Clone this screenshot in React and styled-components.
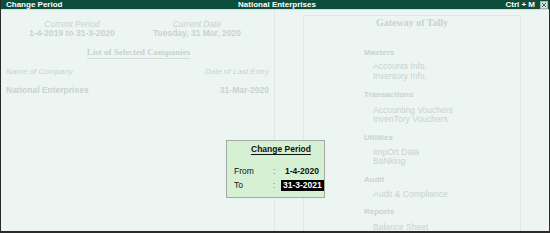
import React from "react";
import styled, { createGlobalStyle } from "styled-components";

const Global = createGlobalStyle`
  html, body { margin: 0; padding: 0; background: #edf5f3; }
  body { font-family: "Liberation Sans", Arial, sans-serif; }
`;

const Window = styled.div`
  position: relative;
  width: 550px;
  height: 233px;
  box-sizing: border-box;
  display: flex;
  flex-direction: column;
  background: #edf5f3;
  border-left: 1px solid #2a2a2a;
  border-right: 1px solid #2a2a2a;
  border-bottom: 2px solid #2a2a2a;
  overflow: hidden;
`;

const TitleBar = styled.div`
  height: 9px;
  background: #0c4e3b;
  color: #fff;
  font-weight: bold;
  font-size: 8px;
  line-height: 9px;
  display: grid;
  grid-template-columns: 1fr auto 1fr;
  align-items: center;
  padding: 0 1px 0 5px;
  border-bottom: 1px solid #cfe0da;
  white-space: nowrap;
`;

const TitleLeft = styled.span``;
const TitleCenter = styled.span``;
const TitleRight = styled.span`
  justify-self: end;
  display: flex;
  align-items: center;
  gap: 5px;
`;

const CloseBox = styled.span`
  width: 6px;
  height: 6px;
  background: #d8e4e0;
  border: 1px solid #9fb5ae;
  display: flex;
  align-items: center;
  justify-content: center;
`;

const Body = styled.div`
  flex: 1;
  display: flex;
  color: #c9d2d0;
  white-space: nowrap;
`;

const LeftPanel = styled.div`
  width: 274px;
  border-right: 1px solid #dfe8e6;
  padding: 0 5px;
  box-sizing: border-box;
  display: flex;
  flex-direction: column;
  font-size: 8.5px;
`;

const InfoRow = styled.div`
  display: grid;
  grid-template-columns: 142px 108px;
  margin: 10px -5px 0 -5px;
`;

const InfoCol = styled.div`
  display: flex;
  flex-direction: column;
  align-items: center;
  line-height: 9px;
`;

const InfoLabel = styled.span`
  font-style: italic;
`;

const InfoValue = styled.span`
  font-weight: bold;
`;

const ListTitle = styled.div`
  align-self: center;
  margin-top: 9px;
  font-family: "Liberation Serif", "Times New Roman", serif;
  font-weight: bold;
  font-size: 9px;
  border-bottom: 1px solid #d2dbd9;
  line-height: 10px;
  padding-bottom: 1px;
  margin-left: 2px;
`;

const SplitRow = styled.div`
  display: flex;
  justify-content: space-between;
  margin-top: ${(p) => p.$mt}px;
  font-style: ${(p) => (p.$italic ? "italic" : "normal")};
  font-weight: ${(p) => (p.$bold ? "bold" : "normal")};
  font-size: ${(p) => (p.$bold ? 8.5 : 8)}px;
  line-height: 9px;
`;

const Gap = styled.div`
  width: 28px;
`;

const Gateway = styled.div`
  width: 218px;
  margin-top: 5px;
  border: 1px solid #dfe8e6;
  border-bottom: none;
  box-sizing: border-box;
  display: flex;
  flex-direction: column;
  font-size: 8.5px;
`;

const GatewayTitle = styled.div`
  text-align: center;
  font-family: "Liberation Serif", "Times New Roman", serif;
  font-weight: bold;
  font-size: 10px;
  line-height: 10px;
  margin-top: 2px;
`;

const Menu = styled.div`
  padding-left: 60px;
  margin-top: 20px;
  display: flex;
  flex-direction: column;
`;

const Section = styled.div`
  margin-top: ${(p) => p.$mt || 0}px;
  font-weight: bold;
  font-size: 8px;
  line-height: 10px;
`;

const Item = styled.div`
  padding-left: 9px;
  line-height: 10px;
  margin-top: ${(p) => p.$mt || 0}px;
`;

const Dialog = styled.div`
  position: absolute;
  left: 225px;
  top: 140px;
  width: 99px;
  height: 58px;
  box-sizing: border-box;
  background: #d6f0d4;
  border: 1px solid #a3aaa4;
  padding: 4px 2px 0 7px;
  color: #111;
  font-size: 8.5px;
  display: flex;
  flex-direction: column;
  white-space: nowrap;
`;

const DialogTitle = styled.div`
  align-self: center;
  font-weight: bold;
  line-height: 9px;
  border-bottom: 1px solid #111;
  margin-left: 6px;
`;

const FieldRow = styled.div`
  display: grid;
  grid-template-columns: 39px 9px 1fr;
  align-items: center;
  margin-top: ${(p) => p.$mt}px;
  line-height: 9px;
`;

const Colon = styled.span`
  color: #777;
`;

const FieldValue = styled.span`
  font-weight: bold;
  justify-self: start;
  padding: 1px 2px;
  margin-left: ${(p) => (p.$active ? -1 : 1)}px;
  background: ${(p) => (p.$active ? "#000" : "transparent")};
  color: ${(p) => (p.$active ? "#fff" : "#111")};
`;

export default function App() {
  return (
    <>
      <Global />
      <Window>
        <TitleBar>
          <TitleLeft>Change Period</TitleLeft>
          <TitleCenter>National Enterprises</TitleCenter>
          <TitleRight>
            <span>Ctrl + M</span>
            <CloseBox>
              <svg width="4" height="4" viewBox="0 0 4 4">
                <path d="M0 0L4 4M4 0L0 4" stroke="#4a5c56" strokeWidth="1" />
              </svg>
            </CloseBox>
          </TitleRight>
        </TitleBar>
        <Body>
          <LeftPanel>
            <InfoRow>
              <InfoCol>
                <InfoLabel>Current Period</InfoLabel>
                <InfoValue>1-4-2019 to 31-3-2020</InfoValue>
              </InfoCol>
              <InfoCol>
                <InfoLabel>Current Date</InfoLabel>
                <InfoValue>Tuesday, 31 Mar, 2020</InfoValue>
              </InfoCol>
            </InfoRow>
            <ListTitle>List of Selected Companies</ListTitle>
            <SplitRow $mt={8} $italic>
              <span>Name of Company</span>
              <span>Date of Last Entry</span>
            </SplitRow>
            <SplitRow $mt={10} $bold>
              <span>National Enterprises</span>
              <span>31-Mar-2020</span>
            </SplitRow>
          </LeftPanel>
          <Gap />
          <Gateway>
            <GatewayTitle>Gateway of Tally</GatewayTitle>
            <Menu>
              <Section>Masters</Section>
              <Item $mt={3}>Accounts Info.</Item>
              <Item>Inventory Info.</Item>
              <Section $mt={9}>Transactions</Section>
              <Item $mt={5}>Accounting Vouchers</Item>
              <Item $mt={-1}>InvenTory Vouchers</Item>
              <Section $mt={9}>Utilities</Section>
              <Item $mt={4}>ImpOrt Data</Item>
              <Item $mt={-1}>BaNking</Item>
              <Section $mt={9}>Audit</Section>
              <Item $mt={4}>Audit &amp; Compliance</Item>
              <Section $mt={8}>Reports</Section>
              <Item $mt={5}>Balance Sheet</Item>
            </Menu>
          </Gateway>
        </Body>
        <Dialog>
          <DialogTitle>Change Period</DialogTitle>
          <FieldRow $mt={11}>
            <span>From</span>
            <Colon>:</Colon>
            <FieldValue>1-4-2020</FieldValue>
          </FieldRow>
          <FieldRow $mt={3}>
            <span>To</span>
            <Colon>:</Colon>
            <FieldValue $active>31-3-2021</FieldValue>
          </FieldRow>
        </Dialog>
      </Window>
    </>
  );
}
